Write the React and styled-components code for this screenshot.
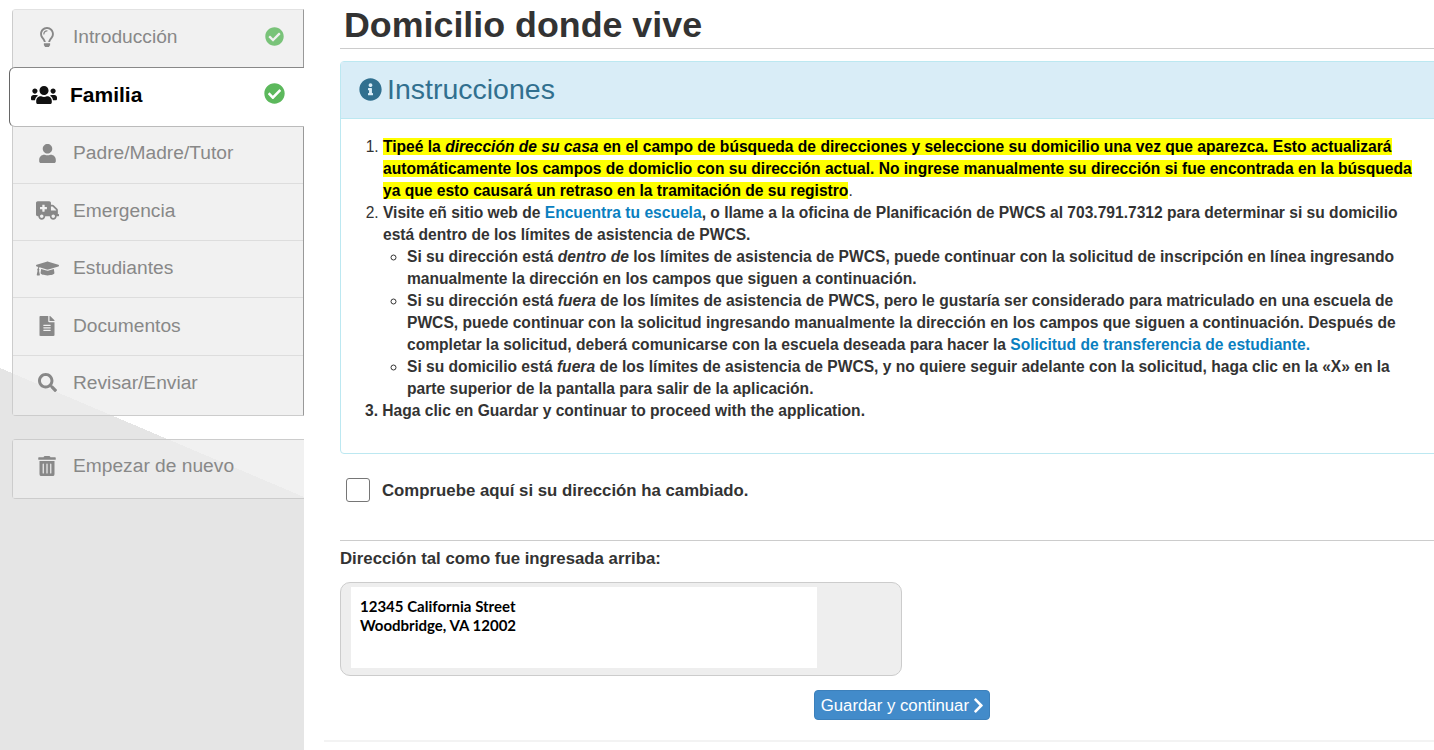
import styled, { createGlobalStyle } from 'styled-components';
import {
  FaRegLightbulb,
  FaUsers,
  FaUser,
  FaAmbulance,
  FaGraduationCap,
  FaFileAlt,
  FaSearch,
  FaTrashAlt,
  FaCheckCircle,
  FaInfoCircle,
  FaChevronRight,
} from 'react-icons/fa';

const GlobalStyle = createGlobalStyle`
  html, body {
    margin: 0;
    height: 100%;
    overflow: hidden;
    background: #fff;
    font-family: 'Liberation Sans', Arial, sans-serif;
  }
`;

const Page = styled.div`
  display: flex;
  width: 1434px;
  height: 750px;
  overflow: hidden;
`;

const Sidebar = styled.aside`
  flex: 0 0 304px;
  box-sizing: border-box;
  padding: 9px 0 0 12px;
  background:
    linear-gradient(to bottom left, #fff 50%, #e5e5e5 50%) 0 368px / 304px 129px no-repeat,
    linear-gradient(#fff 368px, #e5e5e5 368px);
`;

const Menu = styled.nav`
  display: flex;
  flex-direction: column;
  border: 1px solid #ccc;
  border-right: 1px solid #999;
  border-radius: 4px 0 0 4px;
  border-top-color: #e2e2e2;
`;

const MenuItem = styled.div`
  display: flex;
  align-items: center;
  box-sizing: border-box;
  height: 57.3px;
  padding: 0 19px 2px 0;
  background: rgba(237, 237, 237, 0.77);
  color: #888;
  font-size: 19.2px;
  & + & {
    border-top: 1px solid #ddd;
  }
  &:first-child {
    height: 57.5px;
    padding-bottom: 4px;
  }
  &:last-child {
    height: 60.3px;
    padding-bottom: 5px;
  }
`;

const RestartItem = styled(MenuItem)`
  && {
    height: 58px;
    padding-bottom: 6px;
  }
`;

const ActiveItem = styled.div`
  position: relative;
  z-index: 1;
  display: flex;
  align-items: center;
  box-sizing: border-box;
  height: 60px;
  margin: -1px -1px -1px -4px;
  padding: 0 19px 4px 0;
  background: #fff;
  border: 1px solid #bbb;
  border-top-color: #888;
  border-left-color: #666;
  border-right: 0;
  border-radius: 6px 0 0 6px;
  color: #000;
  font-size: 21px;
  font-weight: bold;
`;

const ItemIcon = styled.span`
  display: flex;
  box-sizing: border-box;
  flex: 0 0 60px;
  justify-content: center;
  padding-left: 8px;
  color: ${(p) => p.$color || '#888'};
  font-size: ${(p) => p.$size || 20}px;
`;

const ItemLabel = styled.span`
  flex: 1;
`;

const Check = styled.span`
  display: flex;
  color: #5cb85c;
  opacity: ${(p) => (p.$faded ? 0.8 : 1)};
  font-size: ${(p) => p.$size}px;
  margin-bottom: ${(p) => p.$lift}px;
`;

const RestartCard = styled(Menu)`
  margin-top: 23px;
  border-top-color: #ccc;
  border-right: 0;
`;

const Main = styled.main`
  flex: 0 0 1160px;
  box-sizing: border-box;
  padding: 0 0 0 36px;
`;

const Title = styled.h1`
  margin: 0 0 12px;
  height: 48px;
  padding-left: 4px;
  border-bottom: 1px solid #ccc;
  color: #333;
  font-size: 35.8px;
  font-weight: bold;
  line-height: 50px;
`;

const Panel = styled.section`
  height: 393px;
  box-sizing: border-box;
  border: 1px solid #bce8f1;
  border-radius: 4px 0 0 4px;
`;

const PanelHeading = styled.div`
  display: flex;
  align-items: center;
  gap: 5px;
  box-sizing: content-box;
  height: 54px;
  padding: 0 0 2px 18px;
  background: #d9edf7;
  border-bottom: 1px solid #bce8f1;
  color: #31708f;
  font-size: 28.5px;
`;

const PanelBody = styled.div`
  padding: 17px 44px 0 24px;
  color: #333;
  font-size: 15.6px;
  font-weight: bold;
  line-height: 22px;
`;

const Steps = styled.ol`
  margin: 0;
  padding: 0 0 0 18px;
  li::marker {
    font-weight: normal;
  }
`;

const SubSteps = styled.ul`
  margin: 0;
  padding: 0 0 0 24px;
  list-style: circle;
`;

const Highlight = styled.span`
  background: #ff0;
  color: #000;
`;

const PlainStop = styled.span`
  font-weight: normal;
`;

const Link = styled.a`
  color: #0a7fc0;
`;

const LastStep = styled.div`
  margin: 0;
`;

const CheckRow = styled.label`
  display: flex;
  align-items: center;
  gap: 12px;
  height: 87px;
  padding: 0 0 13px 6px;
  box-sizing: border-box;
  border-bottom: 1px solid #ccc;
  color: #333;
  font-size: 16.8px;
  font-weight: bold;
`;

const CheckBox = styled.span`
  width: 22px;
  height: 22px;
  margin-top: -1px;
  background: #fff;
  border: 1px solid #767676;
  border-radius: 3px;
`;

const AddressLabel = styled.div`
  margin: 8px 0 13px;
  color: #333;
  font-size: 16.8px;
  font-weight: bold;
  line-height: 20px;
`;

const AddressWell = styled.div`
  box-sizing: border-box;
  width: 562px;
  height: 94px;
  padding: 4px 0 0 10px;
  background: #eee;
  border: 1px solid #ccc;
  border-radius: 10px;
`;

const AddressBox = styled.div`
  box-sizing: border-box;
  width: 466px;
  height: 81px;
  padding: 10px 9px;
  background: #fff;
  color: #000;
  font-family: Lato, 'Open Sans', sans-serif;
  font-size: 15px;
  font-weight: bold;
  line-height: 19px;
`;

const Actions = styled.div`
  display: flex;
  width: 650px;
  justify-content: flex-end;
  margin-top: 14px;
`;

const SaveButton = styled.button`
  display: flex;
  align-items: center;
  gap: 1px;
  height: 30px;
  padding: 1px 2px 0 6px;
  background: #428bca;
  border: 1px solid #3c80bb;
  border-radius: 4px;
  color: #fff;
  font-family: inherit;
  font-size: 16.8px;
`;

const Footer = styled.div`
  margin: 20px 0 0 -16px;
  border-top: 2px solid #f3f3f3;
`;

const items = [
  { label: 'Padre/Madre/Tutor', icon: <FaUser />, size: 19 },
  { label: 'Emergencia', icon: <FaAmbulance />, size: 23 },
  { label: 'Estudiantes', icon: <FaGraduationCap />, size: 23 },
  { label: 'Documentos', icon: <FaFileAlt />, size: 20 },
  { label: 'Revisar/Enviar', icon: <FaSearch />, size: 19 },
];

export default function App() {
  return (
    <Page>
      <GlobalStyle />
      <Sidebar>
        <Menu>
          <MenuItem>
            <ItemIcon><FaRegLightbulb /></ItemIcon>
            <ItemLabel>Introducción</ItemLabel>
            <Check $faded $size={19} $lift={1}><FaCheckCircle /></Check>
          </MenuItem>
          <ActiveItem>
            <ItemIcon $color="#111" $size={26}><FaUsers /></ItemIcon>
            <ItemLabel>Familia</ItemLabel>
            <Check $size={21} $lift={3}><FaCheckCircle /></Check>
          </ActiveItem>
          {items.map((item) => (
            <MenuItem key={item.label}>
              <ItemIcon $size={item.size}>{item.icon}</ItemIcon>
              <ItemLabel>{item.label}</ItemLabel>
            </MenuItem>
          ))}
        </Menu>
        <RestartCard>
          <RestartItem>
            <ItemIcon><FaTrashAlt /></ItemIcon>
            <ItemLabel>Empezar de nuevo</ItemLabel>
          </RestartItem>
        </RestartCard>
      </Sidebar>
      <Main>
        <Title>Domicilio donde vive</Title>
        <Panel>
          <PanelHeading>
            <FaInfoCircle size={23} />
            Instrucciones
          </PanelHeading>
          <PanelBody>
            <Steps>
              <li>
                <Highlight>
                  Tipeé la <em>dirección de su casa</em> en el campo de búsqueda de direcciones y seleccione su domicilio una vez que aparezca. Esto actualizará automáticamente los campos de domiclio con su dirección actual. No ingrese manualmente su dirección si fue encontrada en la búsqueda ya que esto causará un retraso en la tramitación de su registro
                </Highlight>
                <PlainStop>.</PlainStop>
              </li>
              <li>
                Visite eñ sitio web de <Link>Encuentra tu escuela</Link>, o llame a la oficina de Planificación de PWCS al 703.791.7312 para determinar si su domicilio está dentro de los límites de asistencia de PWCS.
                <SubSteps>
                  <li>Si su dirección está <em>dentro de</em> los límites de asistencia de PWCS, puede continuar con la solicitud de inscripción en línea ingresando manualmente la dirección en los campos que siguen a continuación.</li>
                  <li>Si su dirección está <em>fuera</em> de los límites de asistencia de PWCS, pero le gustaría ser considerado para matriculado en una escuela de PWCS, puede continuar con la solicitud ingresando manualmente la dirección en los campos que siguen a continuación. Después de completar la solicitud, deberá comunicarse con la escuela deseada para hacer la <Link>Solicitud de transferencia de estudiante.</Link></li>
                  <li>Si su domicilio está <em>fuera</em> de los límites de asistencia de PWCS, y no quiere seguir adelante con la solicitud, haga clic en la «X» en la parte superior de la pantalla para salir de la aplicación.</li>
                </SubSteps>
              </li>
            </Steps>
            <LastStep>3. Haga clic en Guardar y continuar to proceed with the application.</LastStep>
          </PanelBody>
        </Panel>
        <CheckRow>
          <CheckBox />
          Compruebe aquí si su dirección ha cambiado.
        </CheckRow>
        <AddressLabel>Dirección tal como fue ingresada arriba:</AddressLabel>
        <AddressWell>
          <AddressBox>
            12345 California Street
            <br />
            Woodbridge, VA 12002
          </AddressBox>
        </AddressWell>
        <Actions>
          <SaveButton>
            Guardar y continuar
            <FaChevronRight size={17} />
          </SaveButton>
        </Actions>
        <Footer />
      </Main>
    </Page>
  );
}
